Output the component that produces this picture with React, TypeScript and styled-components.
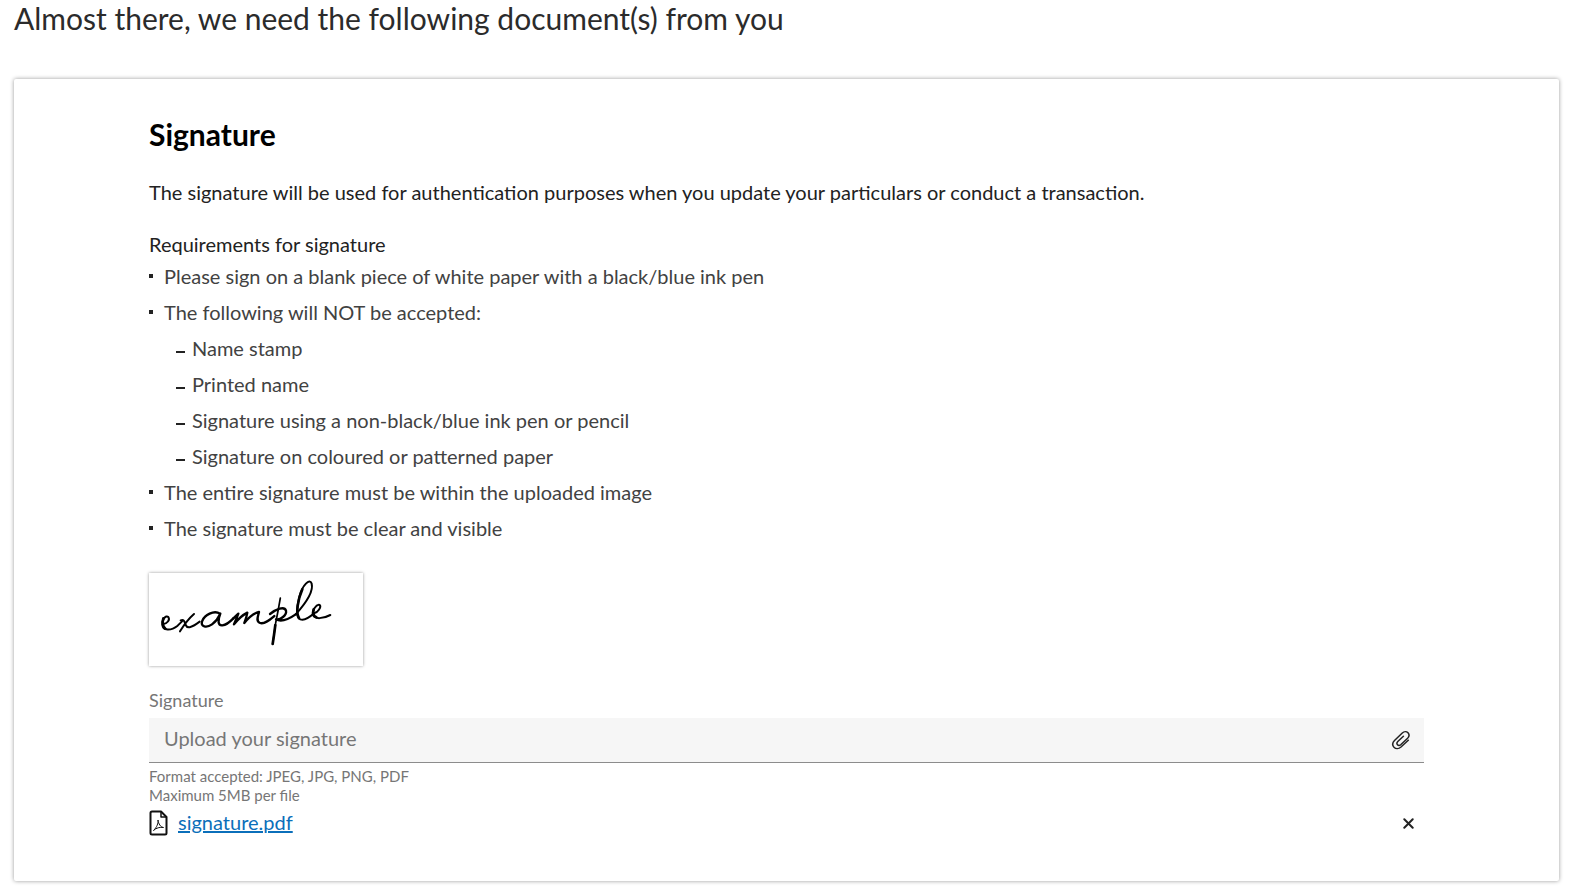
import React from "react";
import styled, { createGlobalStyle } from "styled-components";

const GlobalStyle = createGlobalStyle`
  *, *::before, *::after { box-sizing: border-box; }
  body {
    margin: 0;
    background: #fff;
    color: #222;
    font-family: Lato, Carlito, "Liberation Sans", sans-serif;
    font-size: 20px;
    line-height: 24px;
  }
`;

const Page = styled.main`
  padding: 0 14px 9px;
`;

const PageTitle = styled.h1`
  margin: 0 0 43px;
  color: #2b2b2b;
  font-size: 30px;
  font-weight: 400;
  line-height: 36px;
`;

const Card = styled.section`
  padding: 37px 135px 40px;
  border-radius: 2px;
  background: #fff;
  box-shadow: 0 0 4px rgba(0, 0, 0, 0.4);
`;

const CardTitle = styled.h2`
  margin: 0 0 28px;
  color: #000;
  font-size: 30px;
  font-weight: 700;
  line-height: 36px;
`;

const Intro = styled.p`
  margin: 0 0 28px;
`;

const ListTitle = styled.h3`
  margin: 0;
  font-size: 20px;
  font-weight: 400;
  line-height: 24px;
`;

const Rules = styled.ul`
  margin: 2px 0 27px;
  padding: 0;
  list-style: none;
  color: #424242;
  line-height: 36px;
`;

const Rule = styled.li`
  padding-left: 15px;

  &::before {
    content: "";
    float: left;
    width: 4px;
    height: 4px;
    margin: 16px 0 0 -15px;
    background: #222;
  }
`;

const SubRules = styled.ul`
  margin: 0;
  padding: 0 0 0 12px;
  list-style: none;
`;

const SubRule = styled.li`
  padding-left: 16px;

  &::before {
    content: "";
    float: left;
    width: 9px;
    height: 2px;
    margin: 21px 0 0 -16px;
    background: #222;
  }
`;

const Sample = styled.figure`
  width: 214px;
  height: 93px;
  margin: 0 0 22px;
  box-shadow: 0 0 3px rgba(0, 0, 0, 0.4);

  svg { display: block; }
`;

const FieldLabel = styled.label`
  display: block;
  margin-bottom: 6px;
  color: #767676;
  font-size: 18px;
  line-height: 24px;
`;

const Field = styled.div`
  display: flex;
  align-items: center;
  height: 45px;
  padding: 0 13px 0 15px;
  border-bottom: 1px solid #8c8c8c;
  background: #f6f6f6;
`;

const FieldInput = styled.input`
  flex: 1;
  min-width: 0;
  padding: 0 0 4px;
  border: 0;
  outline: 0;
  background: transparent;
  color: #222;
  font: inherit;

  &::placeholder { color: #767676; opacity: 1; }
`;

const IconButton = styled.button`
  display: flex;
  padding: 0;
  border: 0;
  background: none;
  color: #222;
  cursor: pointer;
`;

const Hints = styled.div`
  padding-top: 4px;
  color: #767676;
  font-size: 15px;
  line-height: 19px;
`;

const FileRow = styled.div`
  display: flex;
  align-items: center;
  height: 36px;
  padding-right: 10px;
`;

const FileLink = styled.a`
  margin: 0 auto 0 10px;
  padding-bottom: 2px;
  color: #0b6fba;
`;

function SignatureSample() {
  return (
    <svg width="214" height="93" viewBox="26 24 642 279" role="img" aria-label="Example signature" fill="none" stroke="#000" strokeWidth="6" strokeLinecap="round" strokeLinejoin="round">
      <path d="M69 177C80 176 90 165 84 156C76 149 65 165 66 178C67 198 92 198 112 182Q119 175 125 169" />
      <path d="M69 160Q63 180 75 191" strokeWidth="8" />
      <path d="M121 166C130 162 132 168 136 180C141 192 155 187 178 170M161 147C146 160 132 178 119 199" />
      <path d="M239 146C220 134 193 151 186 167C178 187 200 189 215 178Q231 166 240 146C232 166 232 182 246 181Q260 180 279 160" strokeWidth="7" />
      <path d="M279 160L294 146Q289 160 281 178Q301 153 321 143Q319 156 312 174Q335 145 356 141C354 152 345 169 359 174C373 178 389 164 402 153" strokeWidth="7" />
      <path d="M420 99Q414 135 406 174L397 237" strokeWidth="5" />
      <path d="M397 237Q401 212 405 180" strokeWidth="8" />
      <path d="M389 147C407 133 432 122 437 137C440 150 420 166 407 163C423 172 446 162 466 148" strokeWidth="7" />
      <path d="M466 148C493 118 520 79 514 56C508 38 486 62 478 92C468 130 466 157 480 163C493 168 508 157 521 145" />
      <path d="M486 73C472 105 466 145 476 159" strokeWidth="8" />
      <path d="M521 145C533 143 544 125 538 120C528 116 514 138 518 150C523 163 548 162 570 150" />
      <path d="M520 133Q515 151 528 157" strokeWidth="8" />
    </svg>
  );
}

function PaperclipIcon() {
  return (
    <svg width="20" height="20" viewBox="0 0 20 20" aria-hidden="true" fill="none" stroke="currentColor" strokeWidth="1.5" strokeLinecap="round">
      <path d="M17.3 10.2L10 17C7.700 19 4.700 19 3 17.200C1.300 15.300 1.500 12.500 3.500 10.500L11.300 3C13 1.400 15.500 1.300 17 2.800C18.400 4.400 18.200 6.600 16.600 8.200L9.700 14.700C8.700 15.600 7.300 15.600 6.500 14.700C5.700 13.800 5.800 12.500 6.800 11.500L12.400 6.200" />
    </svg>
  );
}

function PdfIcon() {
  return (
    <svg width="19" height="26" viewBox="0 0 19 26" aria-hidden="true" fill="none" stroke="#111" strokeWidth="2" strokeLinejoin="round">
      <path d="M3 1.500H12L17.500 7V23Q17.500 24.500 16 24.500H3Q1.500 24.500 1.500 23V3Q1.500 1.500 3 1.500Z" />
      <path d="M12 1.500V7H17.500" strokeWidth="1.500" />
      <path d="M9 10C9.300 13.500 8 17 4.500 20.500C7 18 11 16.800 14.500 17.500C11.500 17 9.500 14 9 10Z" strokeWidth="1" />
    </svg>
  );
}

function CloseIcon() {
  return (
    <svg width="11" height="11" viewBox="0 0 11 11" aria-hidden="true" stroke="currentColor" strokeWidth="2" strokeLinecap="round">
      <path d="M1.300 1.300L9.700 9.700M9.700 1.300L1.300 9.700" />
    </svg>
  );
}

const rejected = [
  "Name stamp",
  "Printed name",
  "Signature using a non-black/blue ink pen or pencil",
  "Signature on coloured or patterned paper",
];

export default function App() {
  return (
    <>
      <GlobalStyle />
      <Page>
        <PageTitle>Almost there, we need the following document(s) from you</PageTitle>
        <Card>
          <CardTitle>Signature</CardTitle>
          <Intro>
            The signature will be used for authentication purposes when you update your particulars or conduct a transaction.
          </Intro>
          <ListTitle>Requirements for signature</ListTitle>
          <Rules>
            <Rule>Please sign on a blank piece of white paper with a black/blue ink pen</Rule>
            <Rule>
              The following will NOT be accepted:
              <SubRules>
                {rejected.map((text) => (
                  <SubRule key={text}>{text}</SubRule>
                ))}
              </SubRules>
            </Rule>
            <Rule>The entire signature must be within the uploaded image</Rule>
            <Rule>The signature must be clear and visible</Rule>
          </Rules>
          <Sample>
            <SignatureSample />
          </Sample>
          <FieldLabel htmlFor="signature">Signature</FieldLabel>
          <Field>
            <FieldInput id="signature" type="text" placeholder="Upload your signature" aria-describedby="signature-hints" readOnly />
            <IconButton type="button" aria-label="Attach file">
              <PaperclipIcon />
            </IconButton>
          </Field>
          <Hints id="signature-hints">
            <div>Format accepted: JPEG, JPG, PNG, PDF</div>
            <div>Maximum 5MB per file</div>
          </Hints>
          <FileRow>
            <PdfIcon />
            <FileLink href="#signature.pdf">signature.pdf</FileLink>
            <IconButton type="button" aria-label="Remove signature.pdf">
              <CloseIcon />
            </IconButton>
          </FileRow>
        </Card>
      </Page>
    </>
  );
}
